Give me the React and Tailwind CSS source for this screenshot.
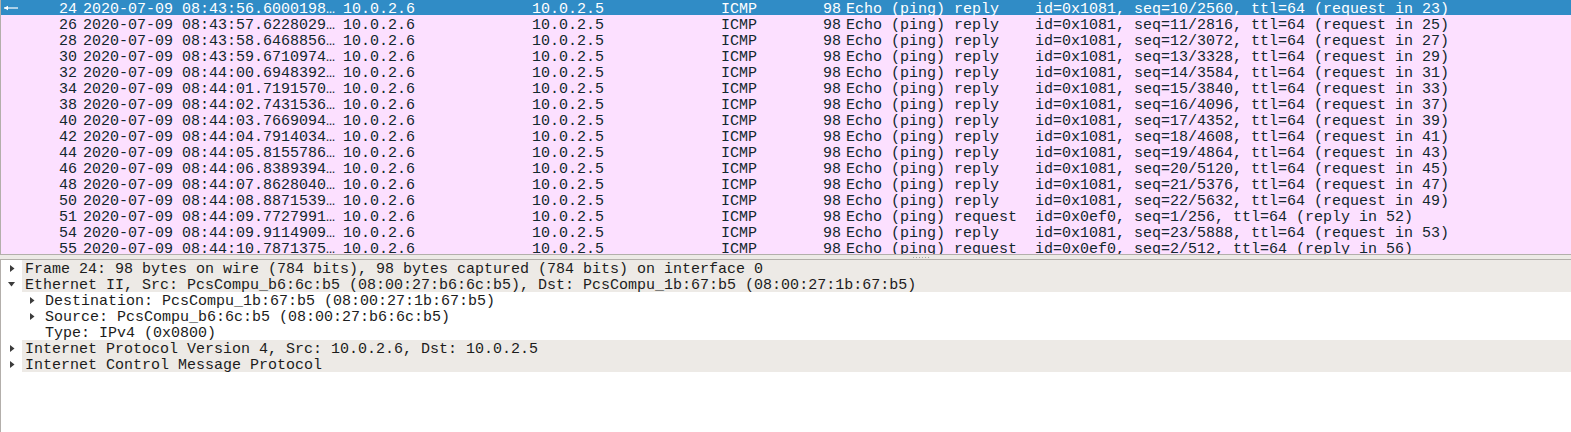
import React from "react";

const rows = [
  ["24", "2020-07-09 08:43:56.6000198…", "reply  ", "id=0x1081, seq=10/2560, ttl=64 (request in 23)"],
  ["26", "2020-07-09 08:43:57.6228029…", "reply  ", "id=0x1081, seq=11/2816, ttl=64 (request in 25)"],
  ["28", "2020-07-09 08:43:58.6468856…", "reply  ", "id=0x1081, seq=12/3072, ttl=64 (request in 27)"],
  ["30", "2020-07-09 08:43:59.6710974…", "reply  ", "id=0x1081, seq=13/3328, ttl=64 (request in 29)"],
  ["32", "2020-07-09 08:44:00.6948392…", "reply  ", "id=0x1081, seq=14/3584, ttl=64 (request in 31)"],
  ["34", "2020-07-09 08:44:01.7191570…", "reply  ", "id=0x1081, seq=15/3840, ttl=64 (request in 33)"],
  ["38", "2020-07-09 08:44:02.7431536…", "reply  ", "id=0x1081, seq=16/4096, ttl=64 (request in 37)"],
  ["40", "2020-07-09 08:44:03.7669094…", "reply  ", "id=0x1081, seq=17/4352, ttl=64 (request in 39)"],
  ["42", "2020-07-09 08:44:04.7914034…", "reply  ", "id=0x1081, seq=18/4608, ttl=64 (request in 41)"],
  ["44", "2020-07-09 08:44:05.8155786…", "reply  ", "id=0x1081, seq=19/4864, ttl=64 (request in 43)"],
  ["46", "2020-07-09 08:44:06.8389394…", "reply  ", "id=0x1081, seq=20/5120, ttl=64 (request in 45)"],
  ["48", "2020-07-09 08:44:07.8628040…", "reply  ", "id=0x1081, seq=21/5376, ttl=64 (request in 47)"],
  ["50", "2020-07-09 08:44:08.8871539…", "reply  ", "id=0x1081, seq=22/5632, ttl=64 (request in 49)"],
  ["51", "2020-07-09 08:44:09.7727991…", "request", "id=0x0ef0, seq=1/256, ttl=64 (reply in 52)"],
  ["54", "2020-07-09 08:44:09.9114909…", "reply  ", "id=0x1081, seq=23/5888, ttl=64 (request in 53)"],
  ["55", "2020-07-09 08:44:10.7871375…", "request", "id=0x0ef0, seq=2/512, ttl=64 (reply in 56)"],
];

function RightTri() {
  return (
    <svg width="6" height="9" viewBox="0 0 6 9" className="shrink-0">
      <path d="M1 1 L5.5 4.5 L1 8 Z" fill="#3c3c3c" />
    </svg>
  );
}

function DownTri() {
  return (
    <svg width="9" height="6" viewBox="0 0 9 6" className="shrink-0">
      <path d="M1 1 L8 1 L4.5 5.5 Z" fill="#3c3c3c" />
    </svg>
  );
}

function PacketRow({ r, sel }) {
  return (
    <div
      className={
        "flex h-[16px] leading-[16px] pt-[3px] whitespace-pre " +
        (sel ? "bg-[#308cc6] text-white" : "bg-[#fce0ff] text-[#12272e]")
      }
    >
      <div className="w-[79px] shrink-0 relative text-right pr-[3px]">
        {sel && (
          <svg
            width="16"
            height="16"
            viewBox="0 0 16 16"
            className="absolute left-[2px] -top-[2px]"
          >
            <path d="M1 8 L15 8" stroke="white" strokeWidth="1.2" />
            <path d="M1 8 L5 5.8 L5 10.2 Z" fill="white" />
          </svg>
        )}
        {r[0]}
      </div>
      <div className="w-[260px] shrink-0 pl-[3px]">{r[1]}</div>
      <div className="w-[189px] shrink-0 pl-[3px]">10.0.2.6</div>
      <div className="w-[189px] shrink-0 pl-[3px]">10.0.2.5</div>
      <div className="w-[82px] shrink-0 pl-[3px]">ICMP</div>
      <div className="w-[43px] shrink-0 text-right pr-[2px]">98</div>
      <div className="flex-1 pl-[3px]">
        {"Echo (ping) " + r[2] + "  " + r[3]}
      </div>
    </div>
  );
}

function DetailRow({ level, arrow, top, children }) {
  return (
    <div className="flex h-[16px] items-center whitespace-pre">
      <div
        className={
          "shrink-0 flex items-center justify-center " +
          (level === 0 ? "w-[21px]" : "w-[41px] pl-[20px]")
        }
      >
        {arrow === "right" && <RightTri />}
        {arrow === "down" && <DownTri />}
      </div>
      <div
        className={
          "flex-1 h-[16px] leading-[16px] pt-[2px] pl-[3px] " +
          (top ? "bg-[#edeae6]" : "")
        }
      >
        {children}
      </div>
    </div>
  );
}

export default function App() {
  return (
    <div
      className="w-[1571px] h-[432px] bg-[#edeae6] overflow-hidden flex flex-col text-[15px]"
      style={{ fontFamily: '"Liberation Mono", monospace' }}
    >
      <div className="h-[255px] shrink-0 bg-white border-l border-b border-[#b3afab] overflow-hidden">
        <div className="-mt-[1px]">
          {rows.map((r, i) => (
            <PacketRow key={r[0]} r={r} sel={i === 0} />
          ))}
        </div>
      </div>
      <div className="h-[4px] shrink-0 flex justify-center items-center">
        <div className="flex gap-[2px] ml-[270px]">
          {[0, 1, 2, 3, 4, 5].map((k) => (
            <div key={k} className="w-[1px] h-[1px] bg-[#a8a4a0]" />
          ))}
        </div>
      </div>
      <div className="flex-1 bg-white border-l border-t border-[#b3afab] text-[#1c1c1c]">
        <DetailRow level={0} arrow="right" top>
          Frame 24: 98 bytes on wire (784 bits), 98 bytes captured (784 bits) on interface 0
        </DetailRow>
        <DetailRow level={0} arrow="down" top>
          Ethernet II, Src: PcsCompu_b6:6c:b5 (08:00:27:b6:6c:b5), Dst: PcsCompu_1b:67:b5 (08:00:27:1b:67:b5)
        </DetailRow>
        <DetailRow level={1} arrow="right">
          Destination: PcsCompu_1b:67:b5 (08:00:27:1b:67:b5)
        </DetailRow>
        <DetailRow level={1} arrow="right">
          Source: PcsCompu_b6:6c:b5 (08:00:27:b6:6c:b5)
        </DetailRow>
        <DetailRow level={1}>Type: IPv4 (0x0800)</DetailRow>
        <DetailRow level={0} arrow="right" top>
          Internet Protocol Version 4, Src: 10.0.2.6, Dst: 10.0.2.5
        </DetailRow>
        <DetailRow level={0} arrow="right" top>
          Internet Control Message Protocol
        </DetailRow>
      </div>
    </div>
  );
}
